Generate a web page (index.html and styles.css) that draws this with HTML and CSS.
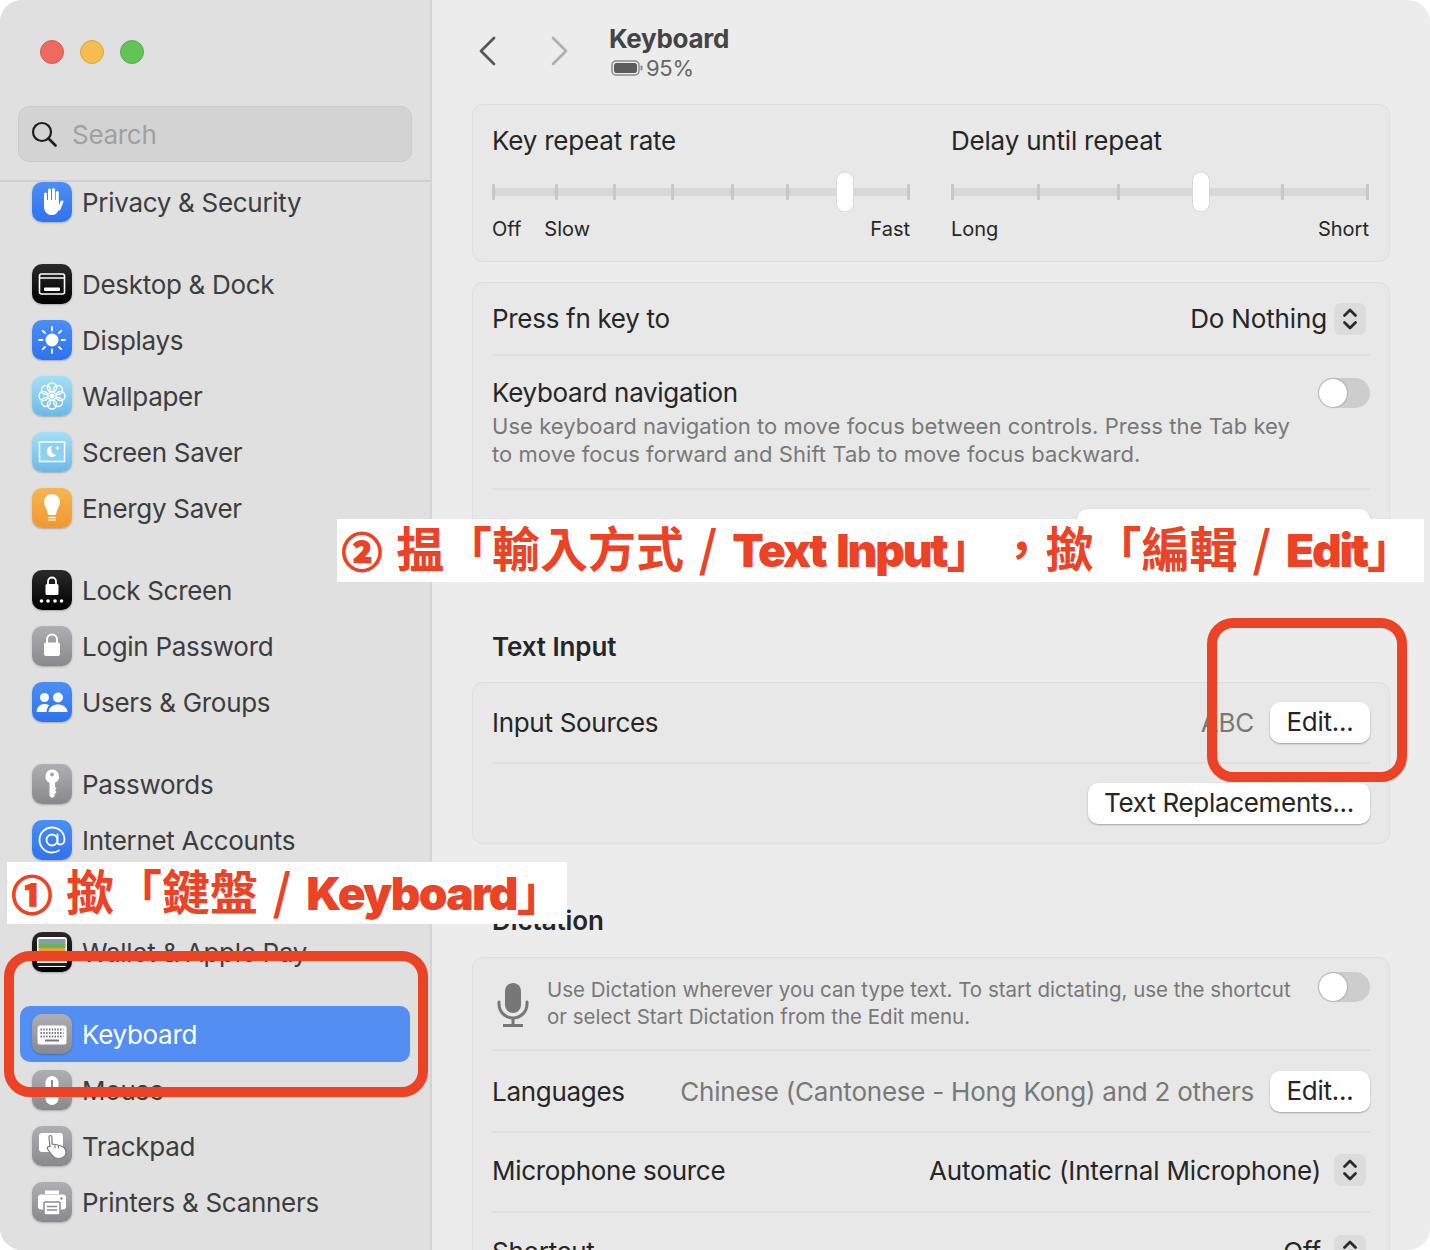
FILE: index.html
```html
<!DOCTYPE html>
<html lang="en">
<head>
    <meta charset="UTF-8">
    <meta name="viewport" content="width=device-width, initial-scale=1.0">
    <title>Keyboard - System Settings</title>
    <link rel="stylesheet" href="styles.css">
</head>
<body>
    <div class="window">
        <!-- Sidebar -->
        <aside class="sidebar">
            <div class="sidebar-head">
                <div class="lights">
                    <span class="light light-red"></span>
                    <span class="light light-yellow"></span>
                    <span class="light light-green"></span>
                </div>
                <div class="search">
                    <svg class="search-icon" viewBox="0 0 26 26" width="26" height="26"><circle cx="11" cy="11" r="9" fill="none" stroke="#1e1e1e" stroke-width="2.2"/><path d="M17.5 17.5L24.5 24.5" stroke="#1e1e1e" stroke-width="2.6" stroke-linecap="round"/></svg>
                    <span>Search</span>
                </div>
            </div>
            <div class="side-list">
                <div class="side-scroll">
                    <div class="side-group">
                        <div class="side-row"><span class="tile tile-blue"><svg viewBox="0 0 40 40"><g stroke="#fff" stroke-width="3" stroke-linecap="round"><path d="M13.5 21V12"/><path d="M17.5 19V8"/><path d="M21.5 19V7.5"/><path d="M25.3 20V10.5"/><path d="M27 27L30 20"/></g><path d="M12 18H27V27Q25 33.5 19 33Q13.500 33 12 26Z" fill="#fff"/></svg></span>Privacy &amp; Security</div>
                    </div>
                    <div class="side-group">
                        <div class="side-row"><span class="tile tile-black"><svg viewBox="0 0 40 40"><rect x="7.500" y="10" width="25" height="20" rx="2" fill="none" stroke="#fff" stroke-width="1.600"/><path d="M8 14H32" stroke="#fff" stroke-width="1.500"/><rect x="12" y="23.500" width="16" height="3.500" rx="1" fill="#fff"/></svg></span>Desktop &amp; Dock</div>
                        <div class="side-row"><span class="tile tile-blue"><svg viewBox="0 0 40 40"><circle cx="20" cy="20" r="6.500" fill="#fff"/><g stroke="#fff" stroke-width="1.800" stroke-linecap="round"><path d="M20 7V10.500"/><path d="M20 29.500V33"/><path d="M7 20H10.500"/><path d="M29.500 20H33"/><path d="M10.800 10.800L13 13"/><path d="M27 27L29.200 29.200"/><path d="M10.800 29.200L13 27"/><path d="M27 13L29.200 10.800"/></g></svg></span>Displays</div>
                        <div class="side-row"><span class="tile tile-sky"><svg viewBox="0 0 40 40"><g fill="none" stroke="#fff" stroke-width="1.500"><circle cx="20" cy="11.500" r="4.500"/><circle cx="26" cy="14" r="4.500"/><circle cx="28.500" cy="20" r="4.500"/><circle cx="26" cy="26" r="4.500"/><circle cx="20" cy="28.500" r="4.500"/><circle cx="14" cy="26" r="4.500"/><circle cx="11.500" cy="20" r="4.500"/><circle cx="14" cy="14" r="4.500"/></g><circle cx="20" cy="20" r="2.500" fill="#fff"/></svg></span>Wallpaper</div>
                        <div class="side-row"><span class="tile tile-sky"><svg viewBox="0 0 40 40"><rect x="7.500" y="10" width="25" height="19.500" fill="#8fd0f2" stroke="#fff" stroke-width="1.500"/><path d="M20 14A5.500 5.500 0 1 0 24.500 23A6 6 0 0 1 20 14Z" fill="#fff"/><path d="M25.500 13.500L26.200 15.300L28 16L26.200 16.700L25.500 18.500L24.800 16.700L23 16L24.800 15.300Z" fill="#fff"/></svg></span>Screen Saver</div>
                        <div class="side-row"><span class="tile tile-orange"><svg viewBox="0 0 40 40"><path d="M20 6A8 8 0 0 1 28 14C28 18.500 24.500 21 24 27H16C15.500 21 12 18.500 12 14A8 8 0 0 1 20 6Z" fill="#fff"/><g stroke="#fff" stroke-width="1.500" stroke-linecap="round"><path d="M16.500 29.500H23.500"/><path d="M17 32H23"/></g></svg></span>Energy Saver</div>
                    </div>
                    <div class="side-group">
                        <div class="side-row"><span class="tile tile-black"><svg viewBox="0 0 40 40"><rect x="13.500" y="14" width="13" height="11" rx="1.500" fill="#fff"/><path d="M16 15V11.500A4 4 0 0 1 24 11.500V15" fill="none" stroke="#fff" stroke-width="1.800"/><g fill="#fff"><circle cx="9.500" cy="31" r="1.800"/><circle cx="16" cy="31" r="1.800"/><circle cx="23" cy="31" r="1.800"/><circle cx="29.500" cy="31" r="1.800"/></g></svg></span>Lock Screen</div>
                        <div class="side-row"><span class="tile tile-grey"><svg viewBox="0 0 40 40"><rect x="12" y="16.500" width="16" height="13.500" rx="2" fill="#fff"/><path d="M15 17V13.500A5 5 0 0 1 25 13.500V17" fill="none" stroke="#fff" stroke-width="2"/></svg></span>Login Password</div>
                        <div class="side-row"><span class="tile tile-blue"><svg viewBox="0 0 40 40"><g fill="#fff"><circle cx="12.500" cy="15.500" r="4.500"/><circle cx="26" cy="15.500" r="5"/><path d="M4.500 30C5 25 8 22 12.500 22C14.500 22 16 22.500 17 23.500C15.500 25 14.500 27.500 14.500 30Z"/><path d="M16.500 30C17 25 21 22.500 26 22.500C31 22.500 35 25 35.500 30Z"/></g></svg></span>Users &amp; Groups</div>
                    </div>
                    <div class="side-group">
                        <div class="side-row"><span class="tile tile-grey"><svg viewBox="0 0 40 40"><path fill-rule="evenodd" d="M20 5.500A7 7 0 0 1 23 18.800V23L24.500 24.500L23 26.500L24.500 28L22.500 30.500V32.500L20 34L17.500 32V18.800A7 7 0 0 1 20 5.500ZM20 8.500A2 2 0 1 0 20 12.500A2 2 0 1 0 20 8.500Z" fill="#fff"/></svg></span>Passwords</div>
                        <div class="side-row"><span class="tile tile-blue"><svg viewBox="0 0 40 40"><g fill="none" stroke="#fff" stroke-width="1.800" stroke-linecap="round"><circle cx="20" cy="20" r="5.500"/><path d="M25.500 14.500V22.500C25.500 25.500 32.500 25.500 32.500 19.500C32.500 12.500 27 7.500 20 7.500C13 7.500 7.500 13 7.500 20C7.500 27 13 32.500 20 32.500C22.500 32.500 25 31.800 27 30.500"/></g></svg></span>Internet Accounts</div>
                        <div class="side-row"><span class="tile tile-blue"><svg viewBox="0 0 40 40"><circle cx="20" cy="20" r="11" fill="none" stroke="#fff" stroke-width="2"/></svg></span>Game Center</div>
                        <div class="side-row"><span class="tile tile-black"><svg viewBox="0 0 40 40"><rect x="5" y="5" width="30" height="30" rx="3" fill="#fff"/><rect x="6.500" y="7" width="27" height="5" fill="#8a9ea8"/><rect x="6.500" y="12" width="27" height="4" fill="#5fb85c"/><rect x="6.500" y="16" width="27" height="4" fill="#e9a23b"/><rect x="6.500" y="20" width="27" height="4" fill="#e56b4d"/><rect x="6.500" y="24" width="27" height="8" fill="#eee"/><rect x="5" y="31" width="30" height="3" fill="#222"/></svg></span>Wallet &amp; Apple Pay</div>
                    </div>
                    <div class="side-group">
                        <div class="side-row side-row-active"><span class="tile tile-grey"><svg viewBox="0 0 40 40"><rect x="5.500" y="11.500" width="29" height="19" rx="2.500" fill="#fff"/><g stroke="#77777c" stroke-width="1.800" stroke-dasharray="1.500 1.300"><path d="M8.500 15.500H31.500"/><path d="M8.500 19H31.500"/><path d="M8.500 22.500H31.500"/></g><path d="M13 26.500H27" stroke="#77777c" stroke-width="2"/></svg></span>Keyboard</div>
                        <div class="side-row"><span class="tile tile-grey"><svg viewBox="0 0 40 40"><rect x="13.500" y="6" width="13" height="29" rx="6.500" fill="#fff"/><path d="M20 10V17" stroke="#8d8d92" stroke-width="2"/></svg></span>Mouse</div>
                        <div class="side-row"><span class="tile tile-grey"><svg viewBox="0 0 40 40"><rect x="7" y="7" width="24" height="19" rx="3" fill="#fff"/><path d="M17 11C17 9 20 9 20 11V18L26 19C31 20 34 22.500 34 26.500C34 30 31 32.500 27 32.500C23 32.500 21 31 19.500 28.500L15.500 23C14.500 21 17 19.500 18 21Z" fill="#fff" stroke="#77777c" stroke-width="1.200"/><g stroke="#77777c" stroke-width="1"><path d="M23 19V22"/><path d="M26.500 19.500V22.500"/></g></svg></span>Trackpad</div>
                        <div class="side-row"><span class="tile tile-grey"><svg viewBox="0 0 40 40"><path d="M13 12V8.500H27V12" fill="#fff"/><rect x="6" y="12.500" width="28" height="15" rx="3" fill="#fff"/><rect x="12" y="20" width="16" height="13" rx="1" fill="#fff" stroke="#8d8d92" stroke-width="1.500"/><g stroke="#8d8d92" stroke-width="1.300"><path d="M15 24.500H25"/><path d="M15 28H25"/></g><circle cx="29.500" cy="16.500" r="1.200" fill="#8d8d92"/></svg></span>Printers &amp; Scanners</div>
                    </div>
                </div>
            </div>
        </aside>

        <!-- Settings pane -->
        <main class="pane">
            <header class="pane-head">
                <svg class="nav-arrow" viewBox="0 0 18 30" width="18" height="30"><path d="M16 2L3 15L16 28" fill="none" stroke="#565656" stroke-width="2.800" stroke-linecap="round" stroke-linejoin="round"/></svg>
                <svg class="nav-arrow nav-forward" viewBox="0 0 18 30" width="18" height="30"><path d="M2 2L15 15L2 28" fill="none" stroke="#b0b0b0" stroke-width="2.800" stroke-linecap="round" stroke-linejoin="round"/></svg>
                <div class="pane-title">
                    <h1>Keyboard</h1>
                    <div class="battery">
                        <svg viewBox="0 0 32 16" width="32" height="16"><rect x="1" y="1" width="27" height="14" rx="4" fill="none" stroke="#8a8a8a" stroke-width="1.500"/><rect x="3" y="3" width="23" height="10" rx="2.500" fill="#5c5c5c"/><rect x="29.500" y="5.500" width="2" height="5" rx="1" fill="#8a8a8a"/></svg>
                        95%
                    </div>
                </div>
            </header>

            <section class="card card-sliders">
                <div class="slider-col">
                    <div class="slider-title">Key repeat rate</div>
                    <svg class="slider" viewBox="0 0 418 44" width="418" height="44">
                        <rect x="1" y="20" width="416" height="8" fill="#d8d8d8"/>
                        <g fill="#c8c8c8"><rect x="0" y="16" width="3" height="16" rx="1"/><rect x="63" y="16" width="3" height="16" rx="1"/><rect x="121" y="16" width="3" height="16" rx="1"/><rect x="179" y="16" width="3" height="16" rx="1"/><rect x="239" y="16" width="3" height="16" rx="1"/><rect x="294" y="16" width="3" height="16" rx="1"/><rect x="415" y="16" width="3" height="16" rx="1"/></g>
                        <rect x="344.500" y="4" width="17" height="40" rx="8.500" fill="#fff" stroke="#d0d0d0" stroke-width="0.800"/>
                    </svg>
                    <div class="slider-labels"><span>Off</span><span class="label-slow">Slow</span><span class="label-end">Fast</span></div>
                </div>
                <div class="slider-col">
                    <div class="slider-title">Delay until repeat</div>
                    <svg class="slider" viewBox="0 0 418 44" width="418" height="44">
                        <rect x="1" y="20" width="416" height="8" fill="#d8d8d8"/>
                        <g fill="#c8c8c8"><rect x="0" y="16" width="3" height="16" rx="1"/><rect x="86" y="16" width="3" height="16" rx="1"/><rect x="166" y="16" width="3" height="16" rx="1"/><rect x="330" y="16" width="3" height="16" rx="1"/><rect x="415" y="16" width="3" height="16" rx="1"/></g>
                        <rect x="241.500" y="4" width="17" height="40" rx="8.500" fill="#fff" stroke="#d0d0d0" stroke-width="0.800"/>
                    </svg>
                    <div class="slider-labels"><span>Long</span><span class="label-end">Short</span></div>
                </div>
            </section>

            <section class="card card-general">
                <div class="row row-fn">
                    <span>Press fn key to</span>
                    <div class="row-right">
                        <span>Do Nothing</span>
                        <span class="stepper"><svg viewBox="0 0 16 26" width="16" height="26"><path d="M2.500 9.500L8 4L13.500 9.500M2.500 16.500L8 22L13.500 16.500" fill="none" stroke="#2a2a2a" stroke-width="2.800" stroke-linecap="round" stroke-linejoin="round"/></svg></span>
                    </div>
                </div>
                <div class="row row-nav">
                    <div class="nav-text">
                        <div>Keyboard navigation</div>
                        <p class="hint">Use keyboard navigation to move focus between controls. Press the Tab key to move focus forward and Shift Tab to move focus backward.</p>
                    </div>
                    <span class="toggle"></span>
                </div>
                <div class="row row-button">
                    <button class="btn btn-shortcuts">Keyboard Shortcuts...</button>
                </div>
            </section>

            <h2 class="section-title">Text Input</h2>
            <section class="card">
                <div class="row row-sources">
                    <span>Input Sources</span>
                    <div class="row-right row-right-wide">
                        <span class="muted">ABC</span>
                        <button class="btn btn-edit">Edit...</button>
                    </div>
                </div>
                <div class="row row-replace">
                    <button class="btn btn-replace">Text Replacements...</button>
                </div>
            </section>

            <h2 class="section-title section-dictation">Dictation</h2>
            <section class="card">
                <div class="row row-dictation">
                    <svg class="mic" viewBox="0 0 32 44" width="32" height="44"><rect x="8" y="0" width="16" height="30" rx="8" fill="#777"/><path d="M2 19V21A14 14 0 0 0 30 21V19" fill="none" stroke="#777" stroke-width="3" stroke-linecap="round"/><path d="M16 35V42M6 42.500H26" stroke="#777" stroke-width="3"/></svg>
                    <p class="hint hint-small">Use Dictation wherever you can type text. To start dictating, use the shortcut or select Start Dictation from the Edit menu.</p>
                    <span class="toggle"></span>
                </div>
                <div class="row row-lang">
                    <span>Languages</span>
                    <div class="row-right row-right-wide">
                        <span class="muted">Chinese (Cantonese - Hong Kong) and 2 others</span>
                        <button class="btn btn-edit">Edit...</button>
                    </div>
                </div>
                <div class="row row-mic">
                    <span>Microphone source</span>
                    <div class="row-right row-right-gap">
                        <span>Automatic (Internal Microphone)</span>
                        <span class="stepper"><svg viewBox="0 0 16 26" width="16" height="26"><path d="M2.500 9.500L8 4L13.500 9.500M2.500 16.500L8 22L13.500 16.500" fill="none" stroke="#2a2a2a" stroke-width="2.800" stroke-linecap="round" stroke-linejoin="round"/></svg></span>
                    </div>
                </div>
                <div class="row row-shortcut">
                    <span>Shortcut</span>
                    <div class="row-right row-right-gap">
                        <span>Off</span>
                        <span class="stepper"><svg viewBox="0 0 16 26" width="16" height="26"><path d="M2.500 9.500L8 4L13.500 9.500M2.500 16.500L8 22L13.500 16.500" fill="none" stroke="#2a2a2a" stroke-width="2.800" stroke-linecap="round" stroke-linejoin="round"/></svg></span>
                    </div>
                </div>
            </section>
        </main>
    </div>

    <!-- Annotations on top of the screenshot -->
    <div class="note note-one"><span class="note-num">①</span> 撳「鍵盤 / <b>Keyboard</b>」</div>
    <div class="note note-two"><span class="note-num">②</span> 揾「輸入方式 / <b>Text Input</b>」&#8202;，撳「編輯 / <b>Edit</b>」</div>
    <div class="mark mark-one"></div>
    <div class="mark mark-two"></div>
</body>
</html>
```

FILE: styles.css
```css
* {
    box-sizing: border-box;
}

body {
    margin: 0;
    width: 1430px;
    height: 1250px;
    overflow: hidden;
    position: relative;
    background-color: #fff;
    font-family: Inter, "Noto Sans", sans-serif;
    font-size: 26px;
    color: #262626;
    letter-spacing: -0.3px;
}

.window {
    display: flex;
    height: 1250px;
    overflow: hidden;
    border-radius: 22px;
    background-color: #ececec;
}

/* Sidebar */
.sidebar {
    width: 432px;
    flex-shrink: 0;
    display: flex;
    flex-direction: column;
    background-color: #e0e0e0;
    border-right: 2px solid #d4d4d4;
}

.sidebar-head {
    padding: 40px 18px 18px;
    border-bottom: 2px solid #cecece;
}

.lights {
    display: flex;
    gap: 16px;
    padding-left: 22px;
    margin-bottom: 42px;
}

.light {
    width: 24px;
    height: 24px;
    border-radius: 50%;
}

.light-red {
    background-color: #ee6a5f;
    border: 1px solid #d9574d;
}

.light-yellow {
    background-color: #f5bd4f;
    border: 1px solid #dfa63c;
}

.light-green {
    background-color: #61c454;
    border: 1px solid #52b046;
}

.search {
    height: 56px;
    display: flex;
    align-items: center;
    gap: 15px;
    padding-left: 12px;
    background-color: #d3d3d3;
    border: 1px solid #cacaca;
    border-radius: 11px;
    color: #a0a0a0;
}

.side-list {
    flex: 1;
    overflow: hidden;
}

.side-scroll {
    margin-top: -8px;
}

.side-group {
    margin-bottom: 26px;
}

.side-row {
    height: 56px;
    margin: 0 20px;
    padding-left: 12px;
    display: flex;
    align-items: center;
    gap: 10px;
    color: #3d3d3d;
    border-radius: 10px;
}

.side-row-active {
    background-color: #538ff2;
    color: #fff;
}

.tile {
    width: 40px;
    height: 40px;
    border-radius: 10px;
    flex-shrink: 0;
    box-shadow: 0 1px 2px rgba(0,0,0,0.25);
}

.tile svg {
    display: block;
    width: 40px;
    height: 40px;
}

.tile-blue {
    background: linear-gradient(#4a8ff7, #2f72f0);
}

.tile-black {
    background: linear-gradient(#2a2a2a, #000);
}

.tile-sky {
    background: linear-gradient(#a3e0f8, #6cb9e8);
}

.tile-orange {
    background: linear-gradient(#f6b651, #f1972f);
}

.tile-grey {
    background: linear-gradient(#aeaeb3, #88888d);
}

/* Pane */
.pane {
    flex: 1;
    overflow: hidden;
    padding: 0 40px;
}

.pane-head {
    height: 104px;
    display: flex;
    align-items: flex-start;
}

.nav-arrow {
    margin: 36px 0 0 6px;
    flex-shrink: 0;
}

.nav-forward {
    margin-left: 55px;
}

.pane-title {
    margin: 22px 0 0 40px;
}

h1 {
    margin: 0;
    font-size: 26px;
    line-height: 34px;
    font-weight: 700;
    color: #444;
}

.battery {
    display: flex;
    align-items: center;
    gap: 3px;
    margin-left: 2px;
    font-size: 22px;
    line-height: 24px;
    color: #666;
}

.card {
    background-color: #e8e8e8;
    border: 1px solid #dedede;
    border-radius: 11px;
    padding: 0 19px;
}

.card-sliders {
    height: 158px;
    display: flex;
    gap: 41px;
    margin-bottom: 20px;
}

.slider-col {
    width: 418px;
}

.slider-title {
    margin-top: 20px;
    line-height: 32px;
    height: 42px;
    letter-spacing: -0.2px;
}

.slider {
    display: block;
    margin-top: 1px;
}

.slider-labels {
    display: flex;
    margin-top: 3px;
    font-size: 20px;
    line-height: 28px;
    letter-spacing: 0;
}

.label-slow {
    margin-left: 23px;
}

.label-end {
    margin-left: auto;
}

.row {
    display: flex;
    align-items: center;
    justify-content: space-between;
    border-bottom: 2px solid #dfdfdf;
}

.row:last-child {
    border-bottom: none;
}

.row-right {
    display: flex;
    align-items: center;
    gap: 7px;
    padding-right: 4px;
    letter-spacing: -0.15px;
}

.row-right-gap {
    gap: 13px;
}

.row-right-wide {
    gap: 16px;
    padding-right: 0;
    letter-spacing: -0.23px;
}

.stepper {
    width: 32px;
    height: 32px;
    background-color: #dcdcdc;
    border-radius: 7px;
    display: flex;
    align-items: center;
    justify-content: center;
}

.row-fn {
    height: 73px;
}

.row-nav {
    height: 134px;
    align-items: flex-start;
    padding-top: 21px;
}

.nav-text {
    width: 805px;
    line-height: 32px;
}

.hint {
    margin: 3px 0 0;
    font-size: 22px;
    line-height: 28px;
    letter-spacing: 0.05px;
    color: #787878;
}

.toggle {
    width: 52px;
    height: 30px;
    flex-shrink: 0;
    background-color: #cdcdcd;
    border-radius: 15px;
    position: relative;
}

.toggle::after {
    content: "";
    position: absolute;
    left: 1px;
    top: 1px;
    width: 28px;
    height: 28px;
    border-radius: 50%;
    background-color: #fff;
    box-shadow: 0 0 2px rgba(0,0,0,0.4);
}

.row-nav .toggle {
    margin-top: 1px;
}

.row-button {
    height: 82px;
    justify-content: flex-end;
    align-items: flex-start;
    padding-top: 19px;
}

.btn {
    height: 41px;
    padding: 0 0 2px;
    background-color: #fff;
    border: none;
    border-radius: 10px;
    box-shadow: 0 1px 2px rgba(0,0,0,0.3);
    font-family: inherit;
    font-size: 26px;
    letter-spacing: inherit;
    color: #262626;
}

.btn-shortcuts {
    width: 293px;
}

.btn-replace {
    width: 282px;
}

.btn-edit {
    width: 100px;
}

.muted {
    color: #787878;
}

.section-title {
    margin: 0;
    font-size: 26px;
    line-height: 32px;
    font-weight: 600;
    letter-spacing: -0.1px;
    color: #262626;
    padding: 58px 20px 19px;
}

.section-dictation {
    padding-bottom: 20px;
    padding-top: 61px;
}

.row-sources {
    height: 81px;
}

.row-replace {
    height: 79px;
    justify-content: flex-end;
    align-items: flex-start;
    padding-top: 19px;
}

.row-dictation {
    height: 93px;
    align-items: flex-start;
    padding-top: 14px;
    gap: 0;
}

.mic {
    margin: 11px 0 0 5px;
    flex-shrink: 0;
}

.hint-small {
    flex: 1;
    margin: 4px 18px 0 18px;
    font-size: 20.500px;
    line-height: 27px;
    letter-spacing: 0;
}

.row-lang {
    height: 82px;
}

.row-mic {
    height: 80px;
    padding-bottom: 4px;
}

.row-shortcut {
    height: 76px;
}

/* Annotations */
.note {
    position: absolute;
    background-color: #fff;
    color: #ec4226;
    font-family: "Noto Sans CJK TC", "Noto Sans", sans-serif;
    font-weight: 700;
    font-size: 48px;
    line-height: 55px;
    height: 62px;
    white-space: nowrap;
    letter-spacing: 0;
    word-spacing: 4px;
    overflow: hidden;
}

.note-num {
    font-size: 40px;
    margin-right: -1px;
    -webkit-text-stroke: 2px #ec4226;
}

.note b {
    font-family: Inter, sans-serif;
    font-size: 46px;
    letter-spacing: -1.700px;
}

.note-two b {
    letter-spacing: -2.200px;
}

.note-one {
    left: 7px;
    top: 862px;
    width: 560px;
    padding-left: 5px;
}

.note-two {
    left: 337px;
    top: 519px;
    width: 1087px;
    height: 63px;
    padding-left: 5px;
}

.mark {
    position: absolute;
    border: 10px solid #ec4226;
    border-radius: 26px;
}

.mark-one {
    left: 4px;
    top: 951px;
    width: 424px;
    height: 146px;
}

.mark-two {
    left: 1207px;
    top: 618px;
    width: 200px;
    height: 164px;
}
```
